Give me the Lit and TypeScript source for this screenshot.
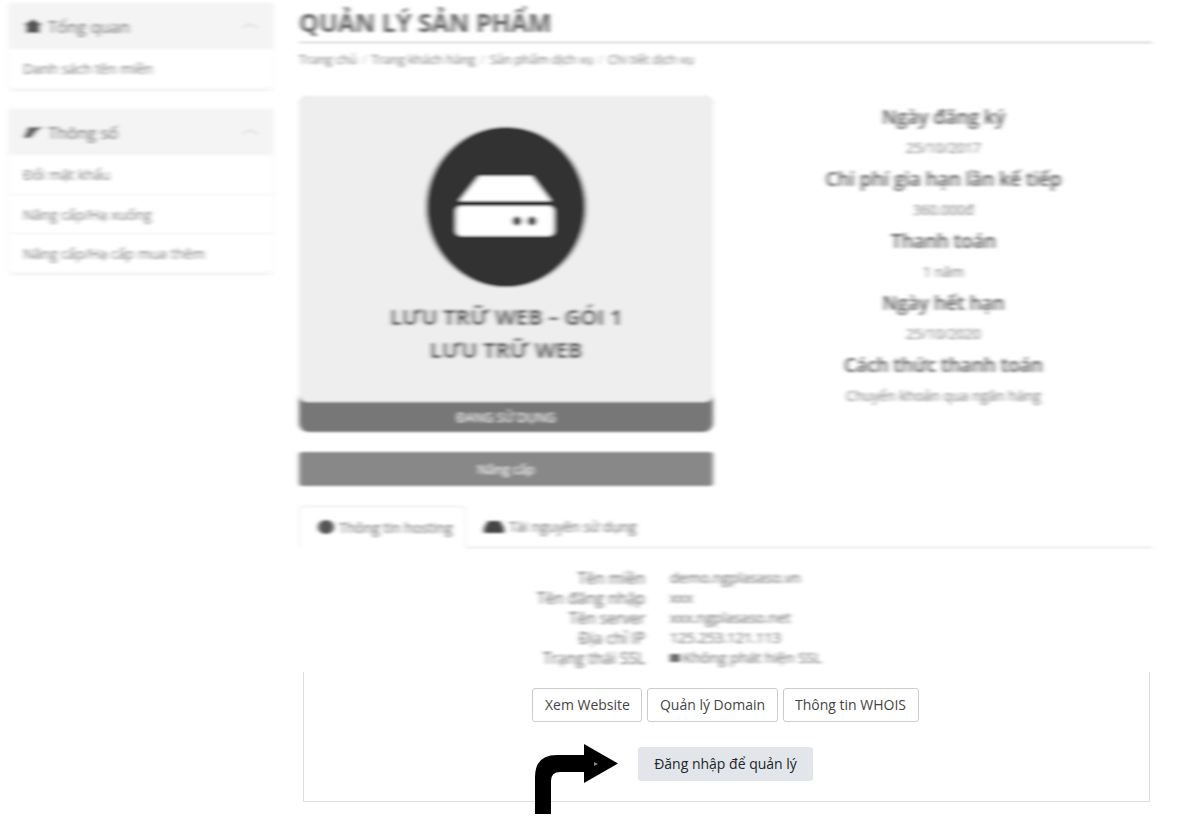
import { LitElement, html, css, svg } from "lit";
import { customElement } from "lit/decorators.js";

const chevron = svg`<svg class="chev" width="18" height="6" viewBox="0 0 18 6"><path d="M1 5 L9 1 L17 5" fill="none" stroke="#ddd" stroke-width="1.6"/></svg>`;

@customElement("app-root")
export class AppRoot extends LitElement {
  static styles = css`
    :host { display: block; width: 1189px; height: 834px; overflow: hidden; background: #fff; font-family: "Open Sans", sans-serif; color: #333; position: relative; }
    .defs { position: absolute; width: 0; height: 0; }
    .page { display: grid; grid-template-columns: 264px 853px; column-gap: 26px; padding-left: 9px; }
    .side { padding-top: 3px; filter: url(#smear); display: flex; flex-direction: column; gap: 21px; }
    .card { box-shadow: 0 1px 3px rgba(0,0,0,.16); background: #fff; }
    .card-h { height: 46px; background: #f4f4f4; display: flex; align-items: center; padding: 0 14px; gap: 5px; font-size: 16.500px; color: #444; }
    .chev { margin-left: auto; margin-right: 0; }
    .card-i { height: 39px; display: flex; align-items: center; padding-left: 14px; font-size: 14px; color: #555; border-top: 1px solid #eee; box-sizing: border-box; }
    .card-h + .card-i { border-top: 0; }
    .top { height: 672px; overflow: hidden; filter: url(#smear); }
    h1 { margin: 0; height: 43px; padding-top: 9px; box-sizing: border-box; font-size: 25px; line-height: 27px; font-weight: 700; color: #666; border-bottom: 1px solid #bbb; }
    .crumb { font-size: 12.500px; line-height: 16px; color: #777; margin-top: 9px; }
    .crumb span { color: #bbb; margin: 0 5px; }
    .prod { display: grid; grid-template-columns: 414px 1fr; column-gap: 22px; margin-top: 28px; }
    .box { height: 336px; border-radius: 9px; background: #777; overflow: hidden; }
    .box-in { height: 306px; background: #eee; border-radius: 0 0 8px 8px; display: flex; flex-direction: column; align-items: center; padding-top: 31px; box-sizing: border-box; }
    .box-in svg { width: 160px; height: 160px; flex: none; }
    .pt { font-size: 22px; font-weight: 700; line-height: 33px; color: #444; letter-spacing: -.2px; }
    .pt.first { margin-top: 13px; }
    .box-f { height: 30px; display: flex; align-items: center; justify-content: center; color: #fff; font-size: 13px; }
    .up { height: 34px; margin-top: 20px; background: #888; border-radius: 3px; color: #fff; font-size: 13px; display: flex; align-items: center; justify-content: center; }
    .facts { text-align: center; padding-top: 6px; display: flex; flex-direction: column; align-items: center; }
    .facts b { font-weight: 600; font-size: 19px; line-height: 30px; color: #555; height: 31px; }
    .facts i { font-style: normal; font-size: 14px; line-height: 30px; color: #777; height: 31px; }
    .tabs { display: flex; height: 42px; margin-top: 20px; border-bottom: 1px solid #ddd; box-sizing: border-box; }
    .tab { display: flex; align-items: center; gap: 5px; padding: 0 18px; font-size: 14px; color: #666; }
    .tab svg { flex: none; }
    .tab.on { width: 167px; box-sizing: border-box; border: 1px solid #e6e6e6; border-bottom: 1px solid #fff; height: 42px; border-radius: 4px 4px 0 0; white-space: nowrap; }
    .info { display: grid; grid-template-columns: 346px 1fr; column-gap: 25px; margin-top: 20px; font-size: 14.500px; line-height: 20px; color: #666; }
    .info .k { text-align: right; font-size: 15.500px; }
    .info .v { display: flex; align-items: center; gap: 3px; }
    .panel { position: absolute; left: 303px; top: 672px; width: 847px; height: 130px; box-sizing: border-box; border: 1px solid #ddd; border-top: 0; background: #fff; padding-top: 16px; display: flex; flex-direction: column; align-items: center; }
    .btns { display: flex; gap: 5px; margin-right: 2px; }
    .btn { height: 34px; box-sizing: border-box; padding: 0 11.5px; border: 1px solid #ccc; border-radius: 3px; background: #fff; color: #444; font: 14px/32px "Open Sans", sans-serif; }
    .login { height: 34px; margin-top: 25px; margin-right: 2px; padding: 0 16px; background: #e2e6ea; color: #212529; font: 14px/34px "Open Sans", sans-serif; border-radius: 3px; border: 0; }
    .arrow { position: absolute; left: 0; top: 0; pointer-events: none; }
  `;

  render() {
    return html`
      <svg class="defs"><defs><filter id="smear" x="-5%" y="-2%" width="110%" height="104%"><feGaussianBlur stdDeviation="2.400 0.900"/></filter></defs></svg>
      <div class="page">
        <aside class="side">
          <div class="card">
            <div class="card-h">
              <svg width="20" height="14" viewBox="0 0 20 14"><path d="M10 0 L20 6 H17 V14 H3 V6 H0 Z" fill="#555"/></svg>
              <span>Tổng quan</span>${chevron}
            </div>
            <div class="card-i">Danh sách tên miền</div>
          </div>
          <div class="card">
            <div class="card-h">
              <svg width="20" height="14" viewBox="0 0 20 14"><path d="M5 2 H20 L14 6 L8 13 H0 Z" fill="#666"/></svg>
              <span>Thông số</span>${chevron}
            </div>
            <div class="card-i">Đổi mật khẩu</div>
            <div class="card-i">Nâng cấp/Hạ xuống</div>
            <div class="card-i">Nâng cấp/Hạ cấp mua thêm</div>
          </div>
        </aside>
        <main>
          <div class="top">
            <h1>QUẢN LÝ SẢN PHẨM</h1>
            <div class="crumb">Trang chủ<span>/</span>Trang khách hàng<span>/</span>Sản phẩm dịch vụ<span>/</span>Chi tiết dịch vụ</div>
            <div class="prod">
              <div>
                <div class="box">
                  <div class="box-in">
                    <svg viewBox="0 0 160 160">
                      <circle cx="80" cy="80" r="80" fill="#333"/>
                      <path d="M53 49 H106 L125 74 H33 Z" fill="#fff"/>
                      <rect x="30" y="79" width="98" height="30" rx="5" fill="#fff"/>
                      <circle cx="91" cy="94" r="4.5" fill="#333"/><circle cx="106" cy="94" r="4.5" fill="#333"/>
                    </svg>
                    <div class="pt first">LƯU TRỮ WEB – GÓI 1</div>
                    <div class="pt">LƯU TRỮ WEB</div>
                  </div>
                  <div class="box-f">ĐANG SỬ DỤNG</div>
                </div>
                <div class="up">Nâng cấp</div>
              </div>
              <div class="facts">
                <b>Ngày đăng ký</b><i>25/10/2017</i>
                <b>Chi phí gia hạn lần kế tiếp</b><i>360.000đ</i>
                <b>Thanh toán</b><i>1 năm</i>
                <b>Ngày hết hạn</b><i>25/10/2020</i>
                <b>Cách thức thanh toán</b><i>Chuyển khoản qua ngân hàng</i>
              </div>
            </div>
            <div class="tabs">
              <div class="tab on">
                <svg width="16" height="14" viewBox="0 0 16 14"><ellipse cx="8" cy="7" rx="8" ry="7" fill="#555"/></svg>Thông tin hosting
              </div>
              <div class="tab">
                <svg width="20" height="12" viewBox="0 0 20 12"><path d="M4 0 H16 L20 7 V12 H0 V7 Z" fill="#444"/></svg>Tài nguyên sử dụng
              </div>
            </div>
            <div class="info">
              <div class="k">Tên miền</div><div class="v">demo.ngplasaso.vn</div>
              <div class="k">Tên đăng nhập</div><div class="v">xxx</div>
              <div class="k">Tên server</div><div class="v">xxx.ngplasaso.net</div>
              <div class="k">Địa chỉ IP</div><div class="v">125.253.121.113</div>
              <div class="k">Trạng thái SSL</div>
              <div class="v"><svg width="10" height="8" viewBox="0 0 10 8"><rect width="10" height="8" fill="#666"/></svg>Không phát hiện SSL</div>
            </div>
          </div>
        </main>
      </div>
      <section class="panel">
        <div class="btns">
          <button class="btn">Xem Website</button>
          <button class="btn">Quản lý Domain</button>
          <button class="btn">Thông tin WHOIS</button>
        </div>
        <button class="login">Đăng nhập để quản lý</button>
      </section>
      <svg class="arrow" width="1189" height="834" viewBox="0 0 1189 834">
        <path d="M535 814 V777 Q535 755 557 755 H584 V744 L618 763.500 L584 783 V772 H560 Q551 772 551 781 V814 Z" fill="#000"/>
        <path d="M594 762 L598 764 L594 766 Z" fill="#888"/>
      </svg>
    `;
  }
}
